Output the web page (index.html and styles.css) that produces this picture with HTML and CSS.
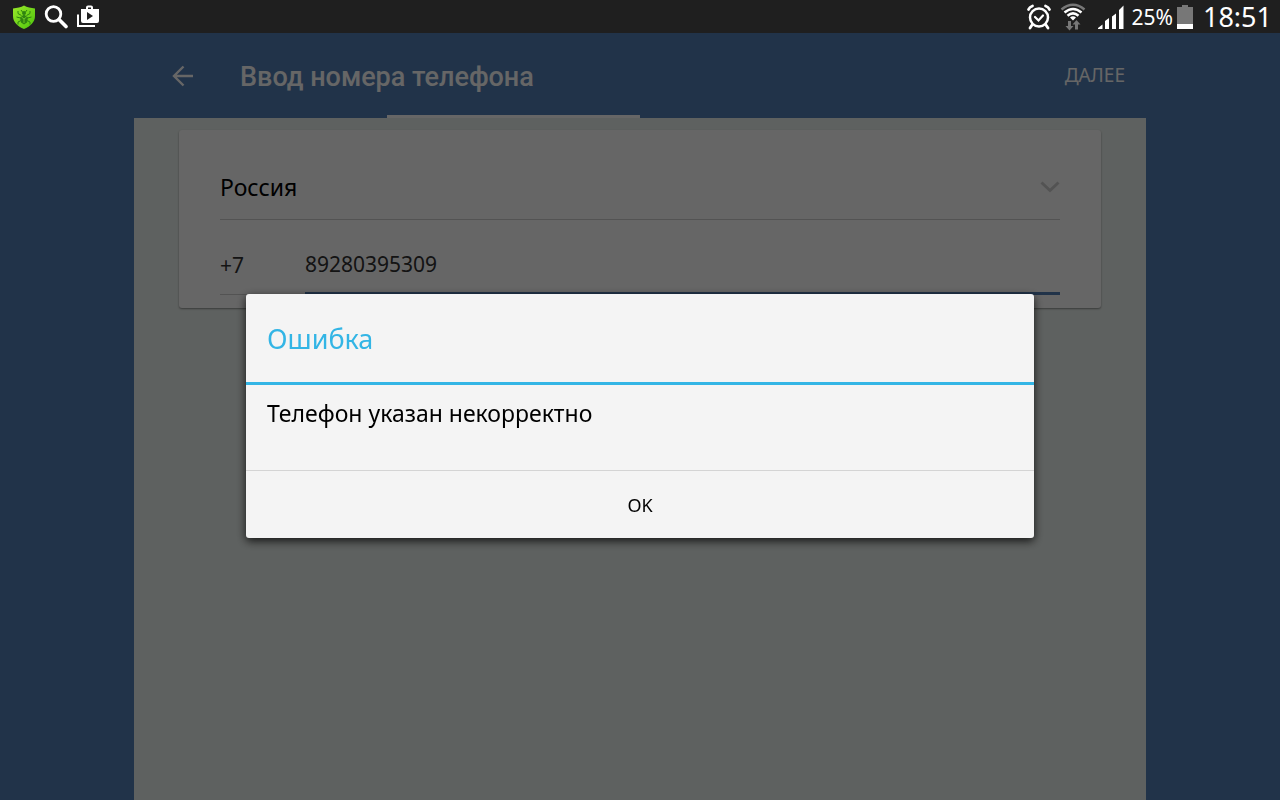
FILE: index.html
```html
<!DOCTYPE html>
<html lang="ru">
<head>
    <meta charset="UTF-8">
    <meta name="viewport" content="width=device-width, initial-scale=1.0">
    <title>Ввод номера телефона</title>
    <link rel="stylesheet" href="styles.css">
</head>
<body>
    <div class="status-bar">
        <div class="status-left">
            <!-- antivirus shield -->
            <svg width="24" height="24" viewBox="0 0 24 24">
                <defs>
                    <linearGradient id="shield" x1="0" y1="0" x2="1" y2="1">
                        <stop offset="0" stop-color="#9be82a"/>
                        <stop offset="1" stop-color="#4cc40c"/>
                    </linearGradient>
                </defs>
                <path d="M12 0.500C9 2.300 5 3 1 3.500v7.500c0 6 4.500 10.500 11 13 6.500-2.500 11-7 11-13V3.500C19 3 15 2.300 12 0.500z" fill="url(#shield)"/>
                <path d="M12 9.500l4 3-1 5-3 2-3-2-1-5z" fill="#2f8410"/>
                <circle cx="12" cy="8" r="2" fill="#2f8410"/>
                <path d="M9.500 10.500L6 8.500V6M14.500 10.500L18 8.500V6M8.500 13L4.500 12M15.500 13l4-1M9 15.500L6 17v2.500M15 15.500l3 1.500v2.500M10.500 7L9 5M13.500 7L15 5" fill="none" stroke="#2f8410" stroke-width="1"/>
                <path d="M9.500 12l2.500 2 2.500-2M12 14v4" fill="none" stroke="#7bd32a" stroke-width="0.800"/>
            </svg>
            <!-- search -->
            <svg width="24" height="24" viewBox="0 0 24 24">
                <circle cx="9.500" cy="9" r="7.300" fill="none" stroke="#fff" stroke-width="2.800"/>
                <path d="M15 14.500l7 7" stroke="#fff" stroke-width="3.600" stroke-linecap="round"/>
            </svg>
            <!-- play store -->
            <svg width="24" height="24" viewBox="0 0 24 24">
                <path d="M2 9.500v11.500H19" fill="none" stroke="#fff" stroke-width="2"/>
                <path d="M11 4.500V2.500Q11 1.500 12 1.500h3Q16 1.500 16 2.500v2" fill="none" stroke="#fff" stroke-width="2"/>
                <path fill-rule="evenodd" d="M5 4h18v12q0 2-2 2H7q-2 0-2-2zM11 7v8l6-4z" fill="#fff"/>
            </svg>
        </div>
        <div class="status-right">
            <!-- alarm -->
            <svg width="26" height="26" viewBox="0 0 26 26">
                <g fill="none" stroke="#fff" stroke-linecap="round">
                    <circle cx="13" cy="13.500" r="9" stroke-width="2.500"/>
                    <path d="M9 13l3.500 3.500L17 11.500" stroke-width="2.200"/>
                    <path d="M2.500 5.500Q3.500 3 6.500 2M23.500 5.500Q22.500 3 19.500 2" stroke-width="2.800"/>
                    <path d="M6 21l-2 3M20 21l2 3" stroke-width="2.800"/>
                </g>
            </svg>
            <!-- wifi with traffic arrows -->
            <svg class="wifi" width="26" height="28" viewBox="0 0 26 28">
                <g fill="none" stroke-width="2.500">
                    <path d="M1.500 6.500Q13-3 24.500 6.500" stroke="#777"/>
                    <path d="M4.500 9.500Q13 2.400 21.500 9.500M7.500 12.800Q13 8 18.500 12.800" stroke="#fff"/>
                </g>
                <path d="M10 14.500Q13 12 16 14.500L13 17.500z" fill="#fff"/>
                <path d="M8 18h3v5h2.500L9.500 27.500l-4-4.500H8zM15 26.500v-5h-2.500l4-4.500 4 4.500H18v5z" fill="#777"/>
            </svg>
            <!-- signal -->
            <svg class="signal" width="26" height="24" viewBox="0 0 26 24">
                <path d="M0 24v-1l4.500-3.500V24zM7 24v-8l4-3v11zM14 24V11.500l4-3V24zM21 24V5l4.500-4.500V24z" fill="#fff"/>
            </svg>
            <span class="battery-text">25%</span>
            <svg class="battery" width="16" height="24" viewBox="0 0 16 24">
                <path d="M5 0h6v2h5v22H0V2h5z" fill="#777"/>
                <path d="M0 19h16v5H0z" fill="#fff"/>
            </svg>
            <span class="clock">18:51</span>
        </div>
    </div>

    <div class="page">
        <header class="toolbar">
            <button class="back" aria-label="Назад">
                <svg width="22" height="22" viewBox="0 0 22 22">
                    <path d="M11.500 1.500L2 11l9.500 9.500M2 11h19" fill="none" stroke="currentColor" stroke-width="2.400"/>
                </svg>
            </button>
            <h1>Ввод номера телефона</h1>
            <button class="next">ДАЛЕЕ</button>
            <div class="progress"></div>
        </header>
        <main class="sheet">
            <form class="card">
                <div class="country-row">
                    <select class="country" aria-label="Страна">
                        <option>Россия</option>
                    </select>
                    <svg class="chevron" width="20" height="12" viewBox="0 0 20 12">
                        <path d="M1.500 1.500L10 9.500l8.500-8" fill="none" stroke="currentColor" stroke-width="3"/>
                    </svg>
                </div>
                <div class="phone-row">
                    <input class="code" type="text" value="+7" aria-label="Код страны">
                    <input class="phone" type="tel" value="89280395309" aria-label="Номер телефона">
                </div>
            </form>
        </main>
    </div>

    <div class="overlay">
        <div class="dialog" role="alertdialog" aria-labelledby="dialogTitle" aria-describedby="dialogText">
            <h2 id="dialogTitle">Ошибка</h2>
            <p id="dialogText">Телефон указан некорректно</p>
            <button class="ok">OK</button>
        </div>
    </div>
</body>
</html>
```
FILE: styles.css
```css
* {
    box-sizing: border-box;
}
body {
    margin: 0;
    min-height: 100vh;
    display: flex;
    flex-direction: column;
    font-family: "Noto Sans", sans-serif;
    background: #537fb6;
    color: #000;
}
button, input, select {
    font-family: inherit;
    border: none;
    border-radius: 0;
    padding: 0;
    margin: 0;
    background: none;
    outline: none;
}

/* status bar */
.status-bar {
    display: flex;
    justify-content: space-between;
    height: 33px;
    padding: 0 8px 0 12px;
    background: #1f1f1f;
    color: #fff;
}
.status-left, .status-right {
    display: flex;
    align-items: center;
}
.status-left {
    gap: 8px;
}
.wifi {
    margin-left: 8px;
}
.signal {
    margin-left: 12px;
}
.battery-text {
    margin-left: 8px;
    font-size: 21px;
}
.battery {
    margin-left: 4px;
}
.clock {
    margin-left: 10px;
    font-size: 27px;
}

/* page */
.page {
    flex: 1;
    display: flex;
    flex-direction: column;
    width: 100%;
    max-width: 1012px;
    margin: 0 auto;
}
.toolbar {
    position: relative;
    display: flex;
    align-items: center;
    height: 85px;
    padding: 0 21px 0 38px;
    color: #fff;
}
.back {
    display: flex;
    color: #fff;
}
.toolbar h1 {
    flex: 1;
    margin: 0 0 0 46px;
    padding-top: 2px;
    font-family: Roboto, sans-serif;
    font-size: 27px;
    font-weight: 500;
}
.next {
    padding-bottom: 2px;
    font-size: 19px;
    color: #fff;
}
.progress {
    position: absolute;
    left: 25%;
    bottom: 0;
    width: 25%;
    height: 3px;
    background: #fff;
}
.sheet {
    flex: 1;
    padding: 12px 45px;
    background: #ebf2ef;
}
.card {
    padding: 28px 41px 13px;
    background: #fff;
    border-radius: 3px;
    box-shadow: 0 1px 2px rgba(0, 0, 0, 0.4);
}
.country-row {
    display: flex;
    align-items: center;
    height: 62px;
    padding-bottom: 3px;
    border-bottom: 1px solid #d0d0d0;
}
.country {
    flex: 1;
    appearance: none;
    font-size: 23px;
    color: #000;
}
.chevron {
    color: #d0d0d0;
}
.phone-row {
    display: flex;
    gap: 20px;
}
.phone-row input {
    height: 75px;
    padding-top: 15px;
    font-size: 21px;
    color: #333;
}
.code {
    width: 65px;
    border-bottom: 1px solid #d0d0d0;
}
.phone {
    flex: 1;
    border-bottom: 3px solid #537fb6;
}

/* dialog */
.overlay {
    position: fixed;
    top: 33px;
    right: 0;
    bottom: 0;
    left: 0;
    display: flex;
    align-items: center;
    justify-content: center;
    padding-bottom: 1px;
    background: rgba(0, 0, 0, 0.6);
}
.dialog {
    width: 90%;
    max-width: 788px;
    background: #f4f4f4;
    border-radius: 3px;
    box-shadow: 0 3px 10px rgba(0, 0, 0, 0.8);
}
.dialog h2 {
    margin: 0;
    padding: 25px 21px 23px;
    border-bottom: 3px solid #33b5e5;
    font-size: 27px;
    font-weight: 400;
    line-height: 40px;
    color: #33b5e5;
}
.dialog p {
    margin: 0;
    padding: 12px 21px 40px;
    font-size: 23px;
    line-height: 33px;
}
.ok {
    display: block;
    width: 100%;
    height: 68px;
    border-top: 1px solid #d4d4d4;
    font-size: 18px;
    color: #000;
}
```
